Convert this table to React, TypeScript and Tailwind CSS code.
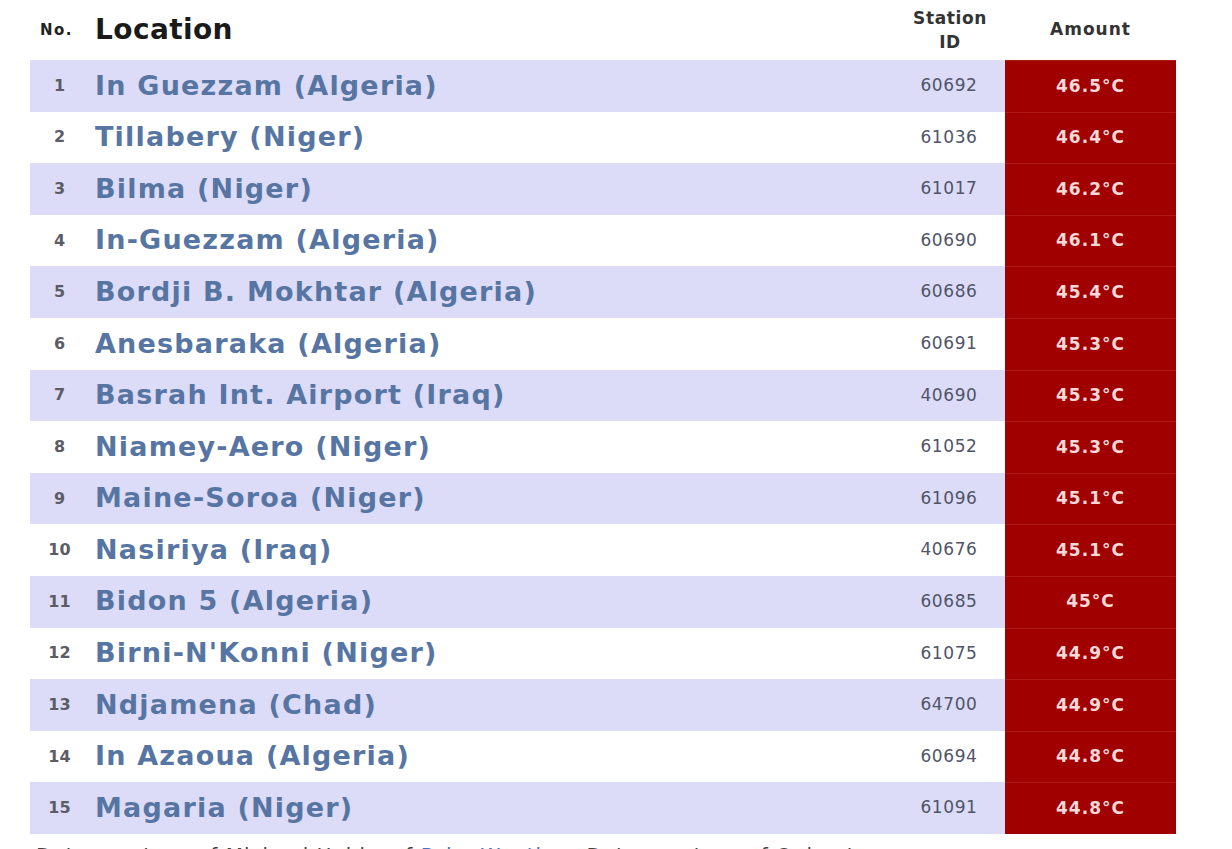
const rows = [
  ["In Guezzam (Algeria)", "60692", "46.5°C"],
  ["Tillabery (Niger)", "61036", "46.4°C"],
  ["Bilma (Niger)", "61017", "46.2°C"],
  ["In-Guezzam (Algeria)", "60690", "46.1°C"],
  ["Bordji B. Mokhtar (Algeria)", "60686", "45.4°C"],
  ["Anesbaraka (Algeria)", "60691", "45.3°C"],
  ["Basrah Int. Airport (Iraq)", "40690", "45.3°C"],
  ["Niamey-Aero (Niger)", "61052", "45.3°C"],
  ["Maine-Soroa (Niger)", "61096", "45.1°C"],
  ["Nasiriya (Iraq)", "40676", "45.1°C"],
  ["Bidon 5 (Algeria)", "60685", "45°C"],
  ["Birni-N'Konni (Niger)", "61075", "44.9°C"],
  ["Ndjamena (Chad)", "64700", "44.9°C"],
  ["In Azaoua (Algeria)", "60694", "44.8°C"],
  ["Magaria (Niger)", "61091", "44.8°C"],
];

export default function App() {
  return (
    <div className="h-[849px] w-[1232px] overflow-hidden bg-white font-['DejaVu_Sans',Verdana,sans-serif]">
      <div className="ml-[30px] w-[1146px]">
        {/* header */}
        <div className="flex h-[60px] items-center">
          <div className="w-[58px] pl-[10px] text-[15px] font-bold tracking-[1.5px] text-[#222]">No.</div>
          <div className="flex-1 pl-[7px] text-[28px] font-bold tracking-[0.4px] text-[#1a1a1a]">Location</div>
          <div className="w-[110px] text-center text-[17px] font-bold leading-[24px] tracking-[0.6px] text-[#333]">
            Station
            <br />
            ID
          </div>
          <div className="w-[171px] text-center text-[17px] font-bold tracking-[1px] text-[#333]">Amount</div>
        </div>

        {/* rows */}
        {rows.map(([name, id, amt], i) => (
          <div
            key={i}
            className={`flex h-[51.6px] items-center ${i % 2 === 0 ? "bg-[#dddcf8]" : "bg-white"}`}
          >
            <div className="w-[58px] pl-[1px] text-center text-[16px] font-bold text-[#5c5c66]">{i + 1}</div>
            <div className="flex-1 pl-[7px] text-[27px] font-bold tracking-[1.2px] text-[#5775a3]">{name}</div>
            <div className="w-[110px] pr-[2px] text-center text-[17px] tracking-[0.6px] text-[#4f5469]">{id}</div>
            <div className="flex h-full w-[171px] items-center justify-center border-t border-[#b01818] bg-[#a00000] text-[17px] font-bold tracking-[1px] text-[#f8d8d8]">
              {amt}
            </div>
          </div>
        ))}

        {/* caption */}
        <div className="mt-[6px] pl-[6px] text-[20px] tracking-[1px] text-[#444]">
          Data courtesy of Michael Hobbs of <span className="text-[#4a6fc0]">Palm Weather</span>, Data courtesy of Ogimet
        </div>
      </div>
    </div>
  );
}
